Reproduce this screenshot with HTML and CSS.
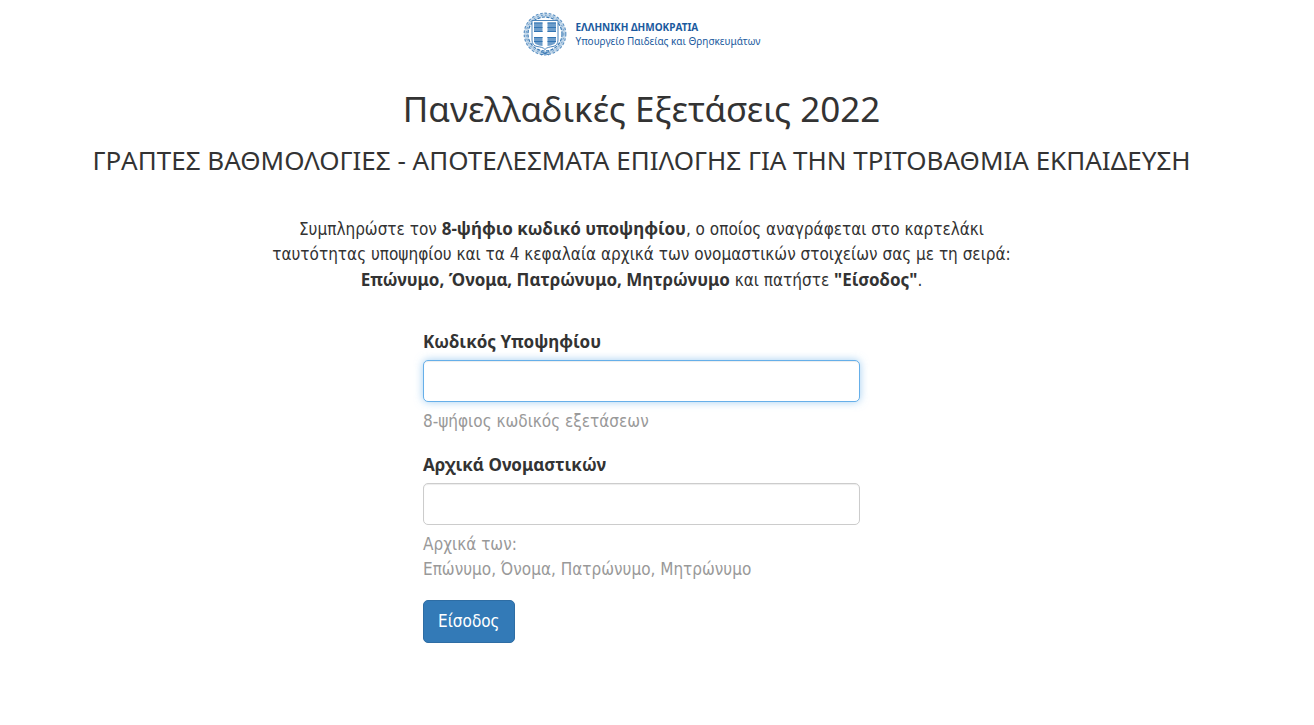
FILE: index.html
```
<!DOCTYPE html>
<html lang="el">
<head>
<meta charset="utf-8">
<title>Πανελλαδικές Εξετάσεις 2022</title>
<link rel="stylesheet" href="styles.css">
</head>
<body>
<header class="brand">
  <svg class="emblem" viewBox="0 0 44 44" aria-hidden="true">
    <g fill="none" stroke="#5f93c4">
      <circle cx="22" cy="22" r="18.800" stroke="#c3d8ea" stroke-width="4"/>
      <circle cx="22" cy="22" r="20.800" stroke-width="1.200" stroke-dasharray="2.600 1.800"/>
      <circle cx="22" cy="22" r="18.800" stroke-width="1" stroke-dasharray="1.700 2.300"/>
      <circle cx="22" cy="22" r="17" stroke="#3d7bb5" stroke-width="1.200" stroke-dasharray="3 1.500"/>
      <path d="M18 39.500l8 3.500M26 39.500l-8 3.500" stroke="#3d7bb5" stroke-width="1"/>
    </g>
    <path d="M9 8.500h26V28c0 4-2 6-5 6.500-3.500.5-6.500 1-8 3-1.500-2-4.500-2.500-8-3-3-.5-5-2.500-5-6.500z" fill="#fff" stroke="#4d86bb" stroke-width="1"/>
    <path d="M11 10.500h8.500V20H11zM24.500 10.500H33V20h-8.500zM11 25h8.500v9c-4-.8-8.500-1-8.500-6zM24.500 25H33v3c0 5-4.500 5.200-8.500 6z" fill="#6d9dca"/>
    <path d="M11 11h8.500M24.500 11H33M11 15.500h8.500M24.500 15.500H33M11 19.500h8.500M24.500 19.500H33M11 25.500h8.500M24.500 25.500H33M11 29.500h8.500M24.500 29.500H33" stroke="#3476b3" stroke-width="1"/>
  </svg>
  <div class="brand-text">
    <strong>ΕΛΛΗΝΙΚΗ ΔΗΜΟΚΡΑΤΙΑ</strong>
    <span>Υπουργείο Παιδείας και Θρησκευμάτων</span>
  </div>
</header>
<main>
  <h1>Πανελλαδικές Εξετάσεις 2022</h1>
  <h2>ΓΡΑΠΤΕΣ ΒΑΘΜΟΛΟΓΙΕΣ - ΑΠΟΤΕΛΕΣΜΑΤΑ ΕΠΙΛΟΓΗΣ ΓΙΑ ΤΗΝ ΤΡΙΤΟΒΑΘΜΙΑ ΕΚΠΑΙΔΕΥΣΗ</h2>
  <p class="intro">Συμπληρώστε τον <strong>8-ψήφιο κωδικό υποψηφίου</strong>, ο οποίος αναγράφεται στο καρτελάκι<br>ταυτότητας υποψηφίου και τα 4 κεφαλαία αρχικά των ονομαστικών στοιχείων σας με τη σειρά:<br><strong>Επώνυμο, Όνομα, Πατρώνυμο, Μητρώνυμο</strong> και πατήστε <strong>"Είσοδος"</strong>.</p>
  <form class="login">
    <div class="field">
      <label for="code">Κωδικός Υποψηφίου</label>
      <input class="is-active" id="code" type="text" aria-describedby="code-help">
      <p class="help" id="code-help">8-ψήφιος κωδικός εξετάσεων</p>
    </div>
    <div class="field">
      <label for="initials">Αρχικά Ονομαστικών</label>
      <input id="initials" type="text" aria-describedby="initials-help">
      <p class="help" id="initials-help">Αρχικά των:<br>Επώνυμο, Όνομα, Πατρώνυμο, Μητρώνυμο</p>
    </div>
    <button type="submit">Είσοδος</button>
  </form>
</main>
</body>
</html>
```
FILE: styles.css
```
* { box-sizing: border-box; }
body {
  margin: 0;
  padding: 12px 31px 40px 0;
  background: #fff;
  color: #333;
  font: 17px/25px "DejaVu Sans Condensed", "Noto Sans", sans-serif;
}
.brand {
  display: flex;
  justify-content: center;
  gap: 9px;
  color: #1b5a9e;
  font: 10px/14px "Noto Sans", sans-serif;
}
.emblem { width: 44px; height: 44px; }
.brand-text {
  display: flex;
  flex-direction: column;
  padding-top: 8px;
}
main { text-align: center; }
h1, h2 { font-family: "Noto Sans", sans-serif; font-weight: 400; }
h1 { margin: 31px 0 13px; font-size: 35px; line-height: 44px; }
h2 { margin: 0; font-size: 26px; line-height: 32px; }
strong, label { font-family: "Noto Sans", sans-serif; font-weight: 700; }
.intro { margin: 40px 0 36px; }
.login {
  max-width: 437px;
  margin: 0 auto;
  text-align: left;
}
.field { margin-bottom: 18px; }
label { display: block; margin-bottom: 6px; }
input {
  display: block;
  width: 100%;
  height: 42px;
  padding: 8px 16px;
  border: 1px solid #ccc;
  border-radius: 5px;
  background: #fff;
  box-shadow: inset 0 1px 1px rgba(0, 0, 0, .075);
  color: #555;
  font: inherit;
  outline: 0;
}
input:focus, .is-active {
  border-color: #66afe9;
  box-shadow: inset 0 1px 1px rgba(0, 0, 0, .075), 0 0 8px rgba(102, 175, 233, .6);
}
.help { margin: 7px 0 0; color: #999; }
button {
  padding: 8px 14px;
  border: 1px solid #2e6da4;
  border-radius: 5px;
  background: #337ab7;
  color: #fff;
  font: inherit;
}
```
